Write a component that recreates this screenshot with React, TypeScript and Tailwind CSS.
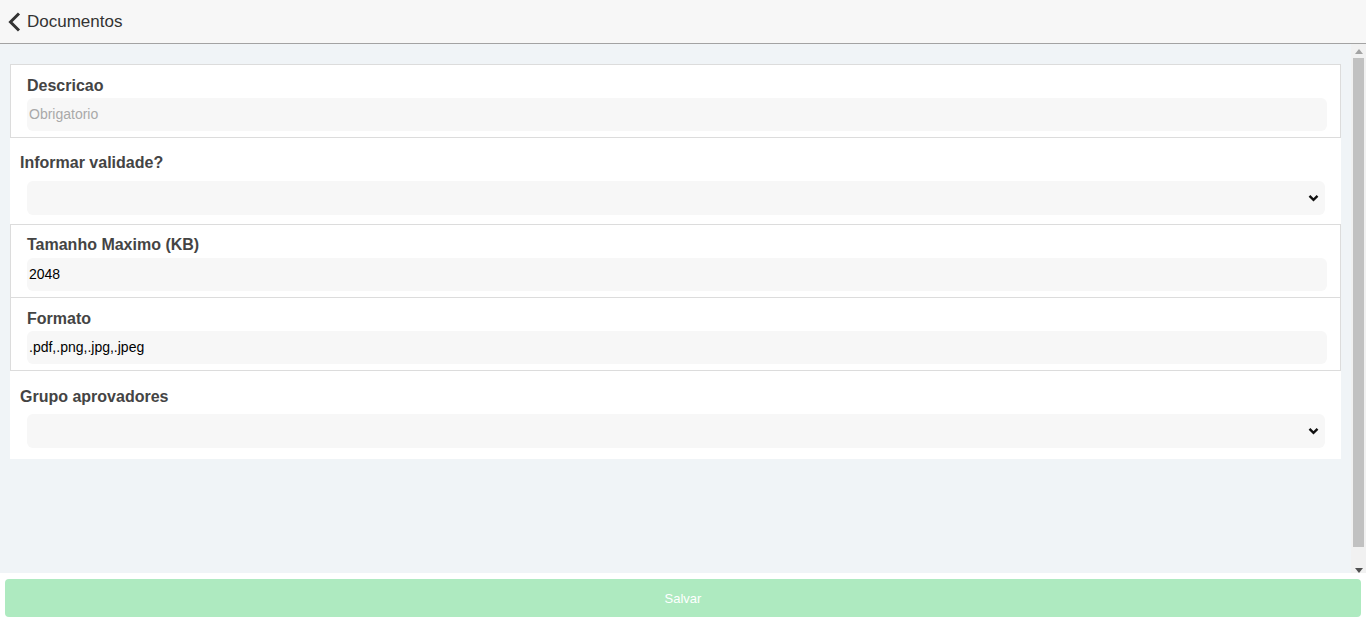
const font = { fontFamily: '"Liberation Sans", Arial, sans-serif' }

function SelectBox() {
  return (
    <div className="ml-[7px] mr-[16px] h-[34px] bg-[#f7f7f7] rounded-[6px] flex items-center justify-end pr-[6px]">
      <svg width="11" height="8" viewBox="0 0 11 8">
        <path d="M1.5 1.8 L5.5 5.8 L9.5 1.8" fill="none" stroke="#111" strokeWidth="2.4" />
      </svg>
    </div>
  )
}

function TextBox({ value, placeholder }: { value?: string; placeholder?: string }) {
  return (
    <input
      readOnly
      value={value}
      placeholder={placeholder}
      className="block w-full h-[33px] px-[2px] pb-[2px] bg-[#f7f7f7] rounded-[6px] text-[14px] text-black placeholder:text-[#a9a9a9] outline-none"
    />
  )
}

// fake classic scrollbar, headless chrome draws none
function ScrollBar() {
  return (
    <div className="w-[15px] shrink-0 bg-[#f1f1f1] flex flex-col items-center">
      <div className="h-[14px] flex items-center justify-center">
        <svg width="8" height="5" viewBox="0 0 8 5">
          <path d="M0 5 L4 0 L8 5 Z" fill="#a3a3a3" />
        </svg>
      </div>
      <div className="w-[11px] h-[489px] bg-[#c1c1c1]" />
      <div className="flex-1" />
      <div className="h-[6px] overflow-hidden flex items-start justify-center pt-[1px]">
        <svg width="8" height="5" viewBox="0 0 8 5">
          <path d="M0 0 L8 0 L4 5 Z" fill="#505050" />
        </svg>
      </div>
    </div>
  )
}

export default function App() {
  return (
    <div className="h-[623px] flex flex-col bg-white" style={font}>
      <div className="h-[44px] shrink-0 bg-[#f7f7f7] border-b border-[#a3a3a3] flex items-center pl-[7px]">
        <svg width="15" height="20" viewBox="0 0 15 20">
          <path d="M12 1.5 L3.5 10 L12 18.5" fill="none" stroke="#333" strokeWidth="3" />
        </svg>
        <span className="ml-[5px] text-[17px] text-[#333]">Documentos</span>
      </div>

      <div className="h-[529px] shrink-0 flex bg-[#f0f4f7]">
        <div className="flex-1 overflow-hidden pt-[20px] px-[10px]">
          <div className="bg-white">
            <div className="border border-[#dcdcdc] pt-[11px] pb-[6px] pl-[16px] pr-[13px]">
              <label className="block mb-[2px] text-[16px] leading-[20px] font-bold text-[#444]">Descricao</label>
              <TextBox placeholder="Obrigatorio" />
            </div>

            <div className="pt-[15px] pb-[9px] pl-[10px]">
              <div className="mb-[8px] text-[16px] leading-[20px] font-bold text-[#444]">Informar validade?</div>
              <SelectBox />
            </div>

            <div className="border-x border-t border-[#dcdcdc] pt-[10px] pb-[6px] pl-[16px] pr-[13px]">
              <label className="block mb-[3px] text-[16px] leading-[20px] font-bold text-[#444]">Tamanho Maximo (KB)</label>
              <TextBox value="2048" />
            </div>

            <div className="border border-[#dcdcdc] pt-[11px] pb-[6px] pl-[16px] pr-[13px]">
              <label className="block mb-[2px] text-[16px] leading-[20px] font-bold text-[#444]">Formato</label>
              <TextBox value=".pdf,.png,.jpg,.jpeg" />
            </div>

            <div className="pt-[16px] pb-[11px] pl-[10px]">
              <div className="mb-[7px] text-[16px] leading-[20px] font-bold text-[#444]">Grupo aprovadores</div>
              <SelectBox />
            </div>
          </div>
        </div>
        <ScrollBar />
      </div>

      <div className="flex-1 px-[5px] pt-[6px] pb-[6px]">
        <button className="w-full h-[38px] pt-[2px] rounded-[4px] bg-[#aeeac0] text-white text-[13px]">Salvar</button>
      </div>
    </div>
  )
}
